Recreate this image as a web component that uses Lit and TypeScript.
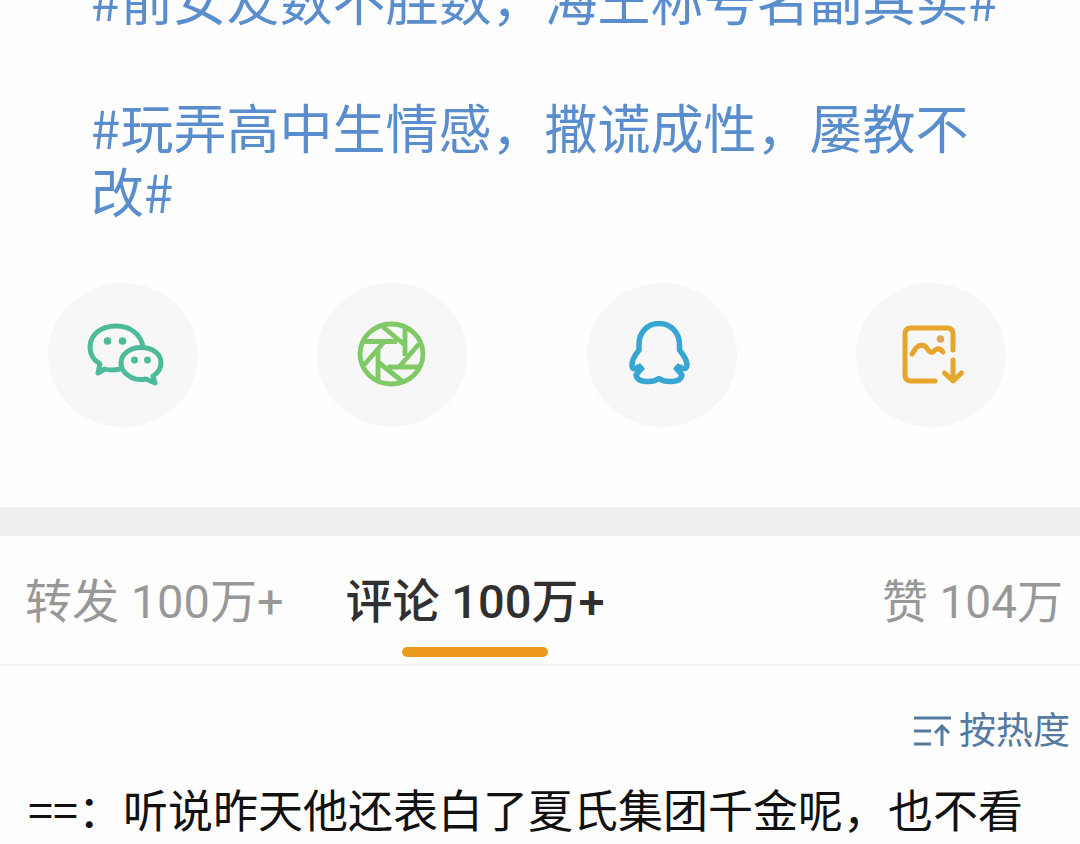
import { LitElement, html, css, svg } from "lit";
import { customElement } from "lit/decorators.js";

const wechat = svg`<svg viewBox="8 13 150 144" aria-hidden="true"><g fill="none" stroke="#4dbb99" stroke-width="5" stroke-linejoin="round" stroke-linecap="round">
<path d="M80 99 Q71 101 65 99 L58 103 L60 94 Q50 88 50 77 C50 64 62 56 76 56 C90 56 101 64 103 77"/>
<path d="M101 77.500 C113 77.500 121 84 121 93 Q121 101 113 106 L115 113 L106 109 Q96 111 89 106 Q81 101 81 93 C81 84 90 77.500 101 77.500Z"/></g>
<g fill="#4dbb99"><circle cx="67.500" cy="71" r="3.800"/><circle cx="82.500" cy="71" r="3.800"/><circle cx="94.500" cy="90" r="3.500"/><circle cx="107.500" cy="90" r="3.500"/></g></svg>`;

const moments = svg`<svg viewBox="7 13 150 144" aria-hidden="true"><g fill="none" stroke="#80c967" stroke-width="4.800" stroke-linejoin="round">
<ellipse cx="81.500" cy="84" rx="31.500" ry="30"/>
<path d="M54 71.500H87M73 57L95 75M95 57V86M109 74L89 97M110 97H78M92 111L68 92M68 110V79M54 95L74 72"/></g></svg>`;

const qq = svg`<svg viewBox="7 13 150 144" aria-hidden="true"><path d="M79 53.500 C67 53.500 59 63 59 74 V80 C55 85 51.500 90 52 96 Q53 101 58 97 L61 98 Q59 102 56 105 Q57 111 66 111.500 Q74 112 79 108.500 Q84 112 92 111.500 Q101 111 102 105 Q99 102 97 98 L100 97 Q106 101 107 95 C107 89 103 85 99.500 80 V74 C99.500 63 91 53.500 79 53.500Z" fill="none" stroke="#37a6d2" stroke-width="5.500" stroke-linejoin="round"/><path d="M55 97l5-4 5 6-4 4zM103 97l-5-4-5 6 4 4z" fill="#37a6d2"/></svg>`;

const savePicture = svg`<svg viewBox="11 13 150 144" aria-hidden="true"><g fill="none" stroke="#e8a52b" stroke-width="5" stroke-linejoin="round" stroke-linecap="round">
<path d="M108 80V64Q108 58 102 58H66Q60 58 60 64V105Q60 111 66 111H90"/>
<path d="M67 84L71 78Q76 73 81 77L84 81Q87 84 90 80Q94 77 98 82"/><path d="M108 90V110M99.500 103L108 111L116.500 103"/></g><circle cx="95.500" cy="69" r="3.800" fill="#e0a95a"/></svg>`;

const sortIcon = svg`<svg class="sort-icon" viewBox="0 0 38 34" aria-hidden="true"><path d="M0 3H37M0 16H17M0 29H17M28 31V11M21 18L28 11L35 18" fill="none" stroke="#55799f" stroke-width="3"/></svg>`;

const shares = [
  { label: "微信", icon: wechat },
  { label: "朋友圈", icon: moments },
  { label: "QQ", icon: qq },
  { label: "保存图片", icon: savePicture },
];

@customElement("app-root")
export class AppRoot extends LitElement {
  static styles = css`
    :host {
      display: block;
      height: 100vh;
      overflow: hidden;
      background: #fefefe;
      font-family: Roboto, "Noto Sans CJK SC", sans-serif;
    }
    .topics {
      margin-top: -34px;
      padding: 0 72px 0 91px;
      font-family: "Noto Sans CJK SC", sans-serif;
      font-size: 53px;
      line-height: 64px;
    }
    .topic {
      display: block;
      margin-bottom: 64px;
      color: #5a8dcd;
      text-decoration: none;
    }
    .shares {
      display: flex;
      justify-content: space-between;
      margin-top: -3px;
      padding: 0 74px 80px 48px;
    }
    button {
      padding: 0;
      border: 0;
      background: none;
      font: inherit;
      color: inherit;
      cursor: pointer;
    }
    .share {
      width: 150px;
      height: 144px;
      border-radius: 50%;
      background: #f7f7f7;
    }
    .share svg {
      display: block;
      width: 100%;
      height: 100%;
    }
    .divider {
      height: 29px;
      background: #eeeeee;
    }
    .tabs {
      display: flex;
      gap: 62px;
      height: 128px;
      padding: 0 17px 0 25px;
      border-bottom: 2px solid #f3f3f3;
      font-size: 47px;
      color: #989898;
    }
    .tab {
      position: relative;
      display: flex;
      align-items: flex-start;
      padding-top: 32px;
      line-height: 68px;
      white-space: nowrap;
    }
    .tab.active {
      color: #303030;
      font-weight: 500;
    }
    .tab.active::after {
      content: "";
      position: absolute;
      left: 50%;
      bottom: 7px;
      width: 146px;
      height: 10px;
      border-radius: 5px;
      background: #ec9b1d;
      transform: translateX(-50%);
    }
    .likes {
      margin-left: auto;
      font-size: 46px;
    }
    .sort-row {
      display: flex;
      justify-content: flex-end;
      padding: 38px 10px 0 0;
    }
    .sort {
      display: flex;
      align-items: center;
      gap: 7px;
      font-size: 37px;
      line-height: 56px;
      color: #55799f;
    }
    .sort-icon {
      width: 38px;
      height: 34px;
    }
    .comment {
      margin: 0;
      padding: 21px 28px 0 28px;
      font-family: "Noto Sans CJK SC", sans-serif;
      font-size: 45px;
      line-height: 56px;
      color: #111111;
    }
  `;

  render() {
    return html`
      <section class="topics">
        <a class="topic" href="#haiwang">#前女友数不胜数，海王称号名副其实#</a>
        <a class="topic" href="#sahuang">#玩弄高中生情感，撒谎成性，屡教不改#</a>
      </section>
      <div class="shares">
        ${shares.map((s) => html`<button class="share" aria-label=${s.label}>${s.icon}</button>`)}
      </div>
      <div class="divider"></div>
      <nav class="tabs">
        <button class="tab">转发 100万+</button>
        <button class="tab active">评论 100万+</button>
        <button class="tab likes">赞 104万</button>
      </nav>
      <div class="sort-row"><button class="sort">${sortIcon}<span>按热度</span></button></div>
      <p class="comment">==：听说昨天他还表白了夏氏集团千金呢，也不看看自己什么身份</p>
    `;
  }
}
